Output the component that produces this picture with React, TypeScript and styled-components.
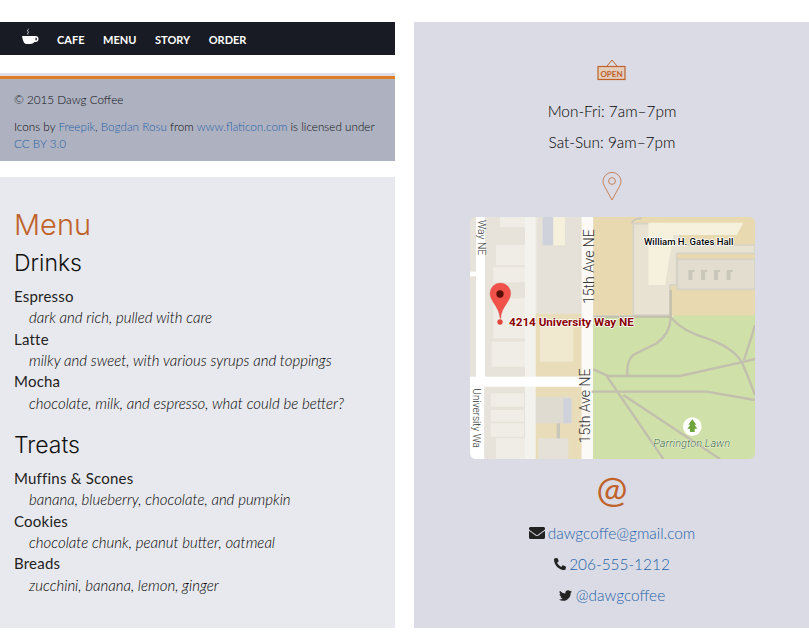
import React from "react";
import styled, { createGlobalStyle } from "styled-components";
import { FaEnvelope, FaPhoneAlt, FaTwitter } from "react-icons/fa";

const Global = createGlobalStyle`
  html, body { margin: 0; padding: 0; background: #fff; }
  body { font-family: Lato, "Liberation Sans", sans-serif; font-weight: 300; color: #111; }
  a { color: #2563aa; text-decoration: none; }
`;

const Page = styled.div`
  display: flex;
  gap: 19px;
  width: 809px;
  height: 637px;
  padding: 22px 0 9px;
  box-sizing: border-box;
  overflow: hidden;
`;
const LeftColumn = styled.div`
  width: 395px;
  display: flex;
  flex-direction: column;
`;
const Nav = styled.nav`
  height: 33px;
  background: #181b23;
  display: flex;
  align-items: center;
  padding-left: 21px;
  color: #fff;
`;
const NavLink = styled.a`
  color: #fff;
  font-size: 11px;
  font-weight: 700;
  text-transform: uppercase;
  margin-right: 18.6px;
  margin-top: 1px;
`;
const CupIcon = styled.svg`
  width: 18px;
  height: 17px;
  margin-right: 18px;
  margin-top: -4px;
`;
const Footer = styled.footer`
  margin-top: 18px;
  border-top: 3px solid #dcdde6;
  background: #aeb1bf;
  height: 88px;
  box-sizing: border-box;
  font-size: 11.7px;
  font-weight: 300;
  line-height: 17px;
  color: #0d0f14;
`;
const FooterRule = styled.div`
  height: 3px;
  background: #de7e26;
`;
const FooterBody = styled.div`
  padding: 12px 14px 0;
  p { margin: 0 0 10px; }
`;
const MenuPanel = styled.section`
  margin-top: 16px;
  background: #e8e9ee;
  flex: 1;
  padding: 31px 14px 0;
  box-sizing: border-box;
`;
const MenuTitle = styled.h1`
  margin: 0;
  font-family: Inter, sans-serif;
  font-weight: 300;
  font-size: 29px;
  line-height: 33px;
  color: #c0622a;
`;
const SectionTitle = styled.h2<{ $top: number; $bottom: number }>`
  margin: ${(p) => p.$top}px 0 ${(p) => p.$bottom}px;
  font-family: Inter, sans-serif;
  font-weight: 300;
  font-size: 23px;
  line-height: 30px;
  color: #111;
`;
const ItemList = styled.dl`
  margin: 0;
  font-size: 15px;
  line-height: 21.33px;
`;
const ItemName = styled.dt`
  font-weight: 400;
  letter-spacing: 0.22px;
  color: #222;
`;
const ItemDesc = styled.dd`
  margin: 0 0 0 15px;
  font-style: italic;
  color: #000;
`;
const RightColumn = styled.aside`
  width: 395px;
  background: #dadbe4;
  display: flex;
  flex-direction: column;
  align-items: center;
  padding: 36px 0 0 1px;
  box-sizing: border-box;
  font-size: 15.4px;
`;
const InfoLine = styled.p<{ $top?: number }>`
  margin: ${(p) => p.$top ?? 9}px 0 0;
  line-height: 22px;
  display: flex;
  align-items: center;
  color: #000;
`;
const SignIcon = styled.svg`
  width: 30px;
  height: 24px;
  display: block;
`;
const PinIcon = styled.svg`
  width: 20px;
  height: 30px;
  display: block;
  margin-top: 18px;
`;
const MapFrame = styled.svg`
  display: block;
  width: 285px;
  height: 242px;
  margin-top: 16px;
  border-radius: 6px;
`;
const AtSign = styled.div`
  margin-top: 8px;
  margin-bottom: 2px;
  font-size: 37px;
  font-weight: 400;
  line-height: 44px;
  color: #c0622a;
`;
const ContactIcon = styled.span<{ $gap: number }>`
  display: inline-flex;
  color: #222;
  margin-right: ${(p) => p.$gap}px;
`;

const items1 = [
  ["Espresso", "dark and rich, pulled with care"],
  ["Latte", "milky and sweet, with various syrups and toppings"],
  ["Mocha", "chocolate, milk, and espresso, what could be better?"],
];
const items2 = [
  ["Muffins & Scones", "banana, blueberry, chocolate, and pumpkin"],
  ["Cookies", "chocolate chunk, peanut butter, oatmeal"],
  ["Breads", "zucchini, banana, lemon, ginger"],
];

const Items = ({ rows }: { rows: string[][] }) => (
  <ItemList>
    {rows.map(([n, d]) => (
      <React.Fragment key={n}>
        <ItemName>{n}</ItemName>
        <ItemDesc>{d}</ItemDesc>
      </React.Fragment>
    ))}
  </ItemList>
);

const MapDrawing = () => (
  <MapFrame viewBox="30 21 855 726">
    <rect x="30" y="21" width="855" height="726" fill="#ebe7df" />
    <path d="M395 320H640L885 320V747H395Z" fill="#cfe0a8" />
    <rect x="640" y="235" width="245" height="100" fill="#cfe0a8" />
    <rect x="400" y="21" width="485" height="295" fill="#e9d9b0" />
    <rect x="225" y="310" width="140" height="190" fill="#e9dcb8" />
    <rect x="240" y="335" width="100" height="120" fill="#f0e9d0" />
    <rect x="225" y="530" width="140" height="217" fill="#e9dcb8" />
    <rect x="75" y="21" width="120" height="480" fill="#e7e3da" />
    <rect x="120" y="21" width="80" height="30" fill="#f0ede6" />
    <rect x="108" y="105" width="90" height="60" fill="#f0ede6" />
    <rect x="100" y="172" width="98" height="45" fill="#f0ede6" />
    <rect x="100" y="265" width="120" height="120" fill="#f0ede6" />
    <rect x="95" y="395" width="110" height="75" fill="#f0ede6" />
    <rect x="30" y="21" width="18" height="480" fill="#e7e3da" />
    <rect x="30" y="185" width="18" height="14" fill="#fff" />
    <rect x="232" y="21" width="133" height="290" fill="#e5e1d8" />
    <rect x="248" y="21" width="32" height="85" fill="#cfd2da" />
    <rect x="280" y="21" width="35" height="85" fill="#f4f0dc" />
    <rect x="75" y="530" width="120" height="217" fill="#e7e3da" />
    <rect x="92" y="550" width="100" height="40" fill="#f0ede6" />
    <rect x="92" y="600" width="100" height="35" fill="#f0ede6" />
    <rect x="92" y="640" width="100" height="40" fill="#f0ede6" />
    <rect x="108" y="685" width="88" height="62" fill="#f0ede6" />
    <rect x="222" y="560" width="110" height="80" fill="#dfdbd0" />
    <rect x="310" y="565" width="25" height="75" fill="#cfd2da" />
    <rect x="235" y="685" width="90" height="62" fill="#e5e1d8" />
    <rect x="290" y="640" width="10" height="45" fill="#c9c6bc" />
    <rect x="195" y="21" width="32" height="726" fill="#f4f2ed" />
    <path d="M520 40V315H630V225H650V130H885V105H660V42Z" fill="#e7e2d2" stroke="#d5d2c6" strokeWidth="5" />
    <path d="M565 38H850L830 75H640L615 225H565Z" fill="#f5f1dc" />
    <rect x="652" y="148" width="233" height="90" fill="#e2ddcf" stroke="#d5d2c6" strokeWidth="5" />
    <path d="M685 180h18v6h-6v24h-12zM723 180h18v6h-6v24h-12zM762 180h18v6h-6v24h-12zM800 180h18v6h-6v24h-12z" fill="#c9c6bc" />
    <path d="M515 40Q520 25 545 25" fill="none" stroke="#c9c6bc" strokeWidth="5" />
    <rect x="48" y="21" width="27" height="480" fill="#fff" />
    <rect x="30" y="500" width="335" height="30" fill="#fff" />
    <rect x="30" y="530" width="42" height="217" fill="#fff" />
    <rect x="365" y="21" width="34" height="726" fill="#fbfaf6" />
    <g fill="none" stroke="#c2bfae" strokeWidth="7">
      <path d="M400 320H632M632 240V325Q630 370 590 400L525 432Q500 445 502 495" />
      <path d="M635 325Q670 365 740 385Q815 410 845 455Q865 500 885 555" />
      <path d="M400 478L445 498H660L840 458L885 447" />
      <path d="M395 545H740L885 570" />
      <path d="M440 498L610 747" />
      <path d="M490 555L780 747" />
      <path d="M852 450Q875 380 885 345" />
    </g>
    <g fontFamily="Roboto, sans-serif" fill="#333">
      <text x="552" y="104" fill="#000" fontWeight="500" fontSize="28.5" stroke="#fff" strokeWidth="5" paintOrder="stroke">William H. Gates Hall</text>
      <text transform="translate(53 30) rotate(90)" fontSize="31">Way NE</text>
      <text transform="translate(39 535) rotate(90)" fontSize="30">University Wa</text>
      <text transform="translate(402 282) rotate(-90)" fontSize="42">15th Ave NE</text>
      <text transform="translate(390 700) rotate(-90)" fontSize="42">15th Ave NE</text>
      <text x="580" y="710" fontSize="33" fontStyle="italic" fill="#2f5e28" stroke="#fff" strokeWidth="2" paintOrder="stroke">Parrington Lawn</text>
      <text x="147" y="348" fontSize="35" fontWeight="700" fill="#8a0000" stroke="#fff" strokeWidth="4" paintOrder="stroke">4214 University Way NE</text>
    </g>
    <circle cx="697" cy="650" r="28" fill="#fff" />
    <path d="M697 628l12 16h-6l9 12h-8v10h-14v-10h-8l9-12h-6z" fill="#6ea43c" />
    <path d="M120 325C118 290 90 275 90 250A31 31 0 0 1 152 250C152 275 124 290 122 325Z" fill="#f0524a" stroke="#d94a40" strokeWidth="1" />
    <circle cx="120" cy="252" r="11" fill="#5a0e08" />
    <circle cx="120" cy="336" r="8" fill="#e2463c" />
  </MapFrame>
);

export default function App() {
  return (
    <Page>
      <Global />
      <LeftColumn>
        <Nav>
          <CupIcon viewBox="0 0 18 17">
            <path d="M1 8h13.5a3 3 0 0 1 0 6h-1Q12 16 9 16H5Q2 15 1 8Zm13.5 1.4v3a1.5 1.5 0 0 0 0-3Z" fill="#fff" />
            <path d="M7 6.5c-1-1 1-2 0-3s0-2 .6-2.5" stroke="#fff" strokeWidth="0.8" fill="none" />
          </CupIcon>
          <NavLink>Cafe</NavLink>
          <NavLink>Menu</NavLink>
          <NavLink>Story</NavLink>
          <NavLink>Order</NavLink>
        </Nav>
        <Footer>
          <FooterRule />
          <FooterBody>
            <p>© 2015 Dawg Coffee</p>
            <p>
              Icons by <a>Freepik</a>, <a>Bogdan Rosu</a> from <a>www.flaticon.com</a> is licensed under <a>CC BY 3.0</a>
            </p>
          </FooterBody>
        </Footer>
        <MenuPanel>
          <MenuTitle>Menu</MenuTitle>
          <SectionTitle $top={7} $bottom={8}>Drinks</SectionTitle>
          <Items rows={items1} />
          <SectionTitle $top={16} $bottom={8}>Treats</SectionTitle>
          <Items rows={items2} />
        </MenuPanel>
      </LeftColumn>
      <RightColumn>
        <SignIcon viewBox="0 0 30 24">
          <path d="M10 8L15 2l5 6" fill="none" stroke="#c0622a" strokeWidth="1" />
          <rect x="1" y="8.5" width="27" height="13" fill="#e3cdbd" stroke="#c0622a" strokeWidth="1.2" />
          <text x="14.5" y="18.5" textAnchor="middle" fontFamily="Lato, sans-serif" fontWeight="700" fontSize="8" fill="#c0622a">OPEN</text>
        </SignIcon>
        <InfoLine $top={18}>Mon-Fri: 7am–7pm</InfoLine>
        <InfoLine>Sat-Sun: 9am–7pm</InfoLine>
        <PinIcon viewBox="0 0 20 30">
          <path d="M10 29L2.6 15.5A9 9 0 1 1 17.4 15.5Z" fill="none" stroke="#c98258" strokeWidth="1" />
          <circle cx="10" cy="10" r="3.4" fill="none" stroke="#c98258" strokeWidth="1" />
        </PinIcon>
        <MapDrawing />
        <AtSign>@</AtSign>
        <InfoLine $top={9}>
          <ContactIcon $gap={3}><FaEnvelope size={16} /></ContactIcon><a>dawgcoffe@gmail.com</a>
        </InfoLine>
        <InfoLine>
          <ContactIcon $gap={3}><FaPhoneAlt size={12} /></ContactIcon><a>206-555-1212</a>
        </InfoLine>
        <InfoLine>
          <ContactIcon $gap={4}><FaTwitter size={13} /></ContactIcon><a>@dawgcoffee</a>
        </InfoLine>
      </RightColumn>
    </Page>
  );
}
